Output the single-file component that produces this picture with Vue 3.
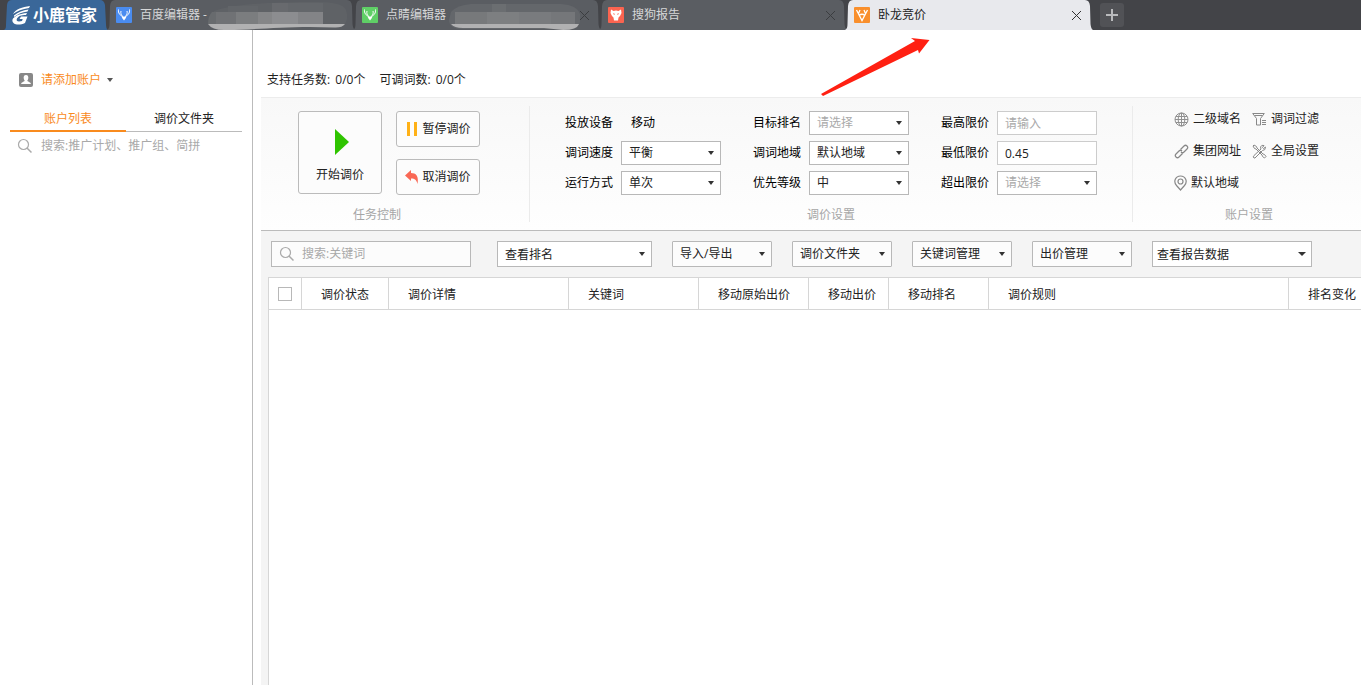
<script setup>
import { reactive, ref } from 'vue'

const tabs = [
  { name: '百度编辑器', suffix: ' -', icon: 'deer', color: '#4a8cf0', close: false, mask: 'a' },
  { name: '点睛编辑器', suffix: '', icon: 'deer', color: '#5fcf66', close: true, mask: 'b' },
  { name: '搜狗报告', suffix: '', icon: 'fox', color: '#fb6450', close: true },
  { name: '卧龙竞价', suffix: '', icon: 'dragon', color: '#f98f2c', close: true, active: true },
]

const form = reactive({ speed: '平衡', mode: '单次', rank: '', area: '默认地域', level: '中', max: '', min: '0.45', over: '' })

const fields = [
  { id: 'device', label: '投放设备', type: 'text', value: '移动' },
  { id: 'rank', label: '目标排名', type: 'select', options: ['1', '2', '3'], hint: '请选择' },
  { id: 'max', label: '最高限价', type: 'input', hint: '请输入' },
  { id: 'speed', label: '调词速度', type: 'select', options: ['平衡', '快速'] },
  { id: 'area', label: '调词地域', type: 'select', options: ['默认地域'] },
  { id: 'min', label: '最低限价', type: 'input', hint: '请输入' },
  { id: 'mode', label: '运行方式', type: 'select', options: ['单次', '循环'] },
  { id: 'level', label: '优先等级', type: 'select', options: ['高', '中', '低'] },
  { id: 'over', label: '超出限价', type: 'select', options: ['是', '否'], hint: '请选择' },
]

const menus = ['导入/导出', '调价文件夹', '关键词管理', '出价管理']
const columns = ['调价状态', '调价详情', '关键词', '移动原始出价', '移动出价', '移动排名', '调价规则', '排名变化']
const rankView = ref('查看排名')
const reportView = ref('查看报告数据')
const accountKeyword = ref('')
const keyword = ref('')
</script>

<template>
  <div class="page">
    <header class="topbar">
      <a class="brand" href="#">
        <svg class="shape" viewBox="0 0 104 30" preserveAspectRatio="none"><path d="M0 30C2 29 2 27 2 24L3 5Q3.500 0 8 0H96Q100 0 101 5L102 24Q102 29 104 30Z" fill="#3a6799" /></svg>
        <svg class="mark" width="19" height="19" viewBox="0 0 19 19" fill="#fff">
          <path d="M1 8C4 3 10 1 18 0L17 2C10 3 5 5 1 8Z" />
          <path d="M2 9.500C6 6 11 4.300 16.500 3.500L15.500 5.500C10 6 6 8 2 11Z" />
          <path d="M1 12.500C4 9.500 8 7.500 15 7L14 9C9 9 6.500 10 5 12.500C4 14.500 5 15.500 7 15.500L10 15L10.700 13H7.500L9 10.500H15.500L13 17C9 19 4 19 2 17.500C0 16 0 14 1 12.500Z" />
        </svg>
        <span class="brand-name">小鹿管家</span>
      </a>
      <nav class="tabs">
        <div v-for="t in tabs" :key="t.name" class="tab" :class="{ active: t.active }">
          <svg class="shape" viewBox="0 0 248 30" preserveAspectRatio="none"><path d="M0 30C2 29 2.500 27 2.500 24L3 6Q3.500 0 8 0H240Q244.500 0 245 6L245.500 24Q246 29 248 30Z" /></svg>
          <a class="tab-link" href="#">
            <svg class="tab-icon" width="16" height="16" viewBox="0 0 16 16">
              <rect width="16" height="16" rx="1" :fill="t.color" />
              <g v-if="t.icon === 'deer'" fill="none" stroke="#fff">
                <path d="M2.500 2.500C2 6 4 8.500 7 9.500M13.500 2.500C14 6 12 8.500 9 9.500M5 4C4.500 6 5 7 6 8.500M11 4C11.500 6 11 7 10 8.500" />
                <path d="M5.500 9.500H10.500L9.500 11.500L8 13.500L6.500 11.500Z" fill="#fff" stroke="none" />
              </g>
              <path v-else-if="t.icon === 'fox'" fill="#fff" fill-rule="evenodd" d="M3 2.500L5.500 4L8 3.500L10.500 4L13 2.500L13.500 6L12 9L10.500 10.500L10 13.500H6L5.500 10.500L4 9L2.500 6ZM5 6L6 8L7 7ZM11 6L10 8L9 7Z" />
              <g v-else fill="none" stroke="#fff" stroke-width="1.300">
                <path d="M2.500 3L8 13.500L13.500 3M5 8.500Q8 6 11 8.500M6 3L4.500 6.500M10 3L11.500 6.500" />
              </g>
            </svg>
            <span>{{ t.name }}{{ t.suffix }}</span>
          </a>
          <svg v-if="t.mask === 'a'" class="mask mask-a" width="140" height="29" viewBox="0 0 140 29">
            <path d="M6 9C25 2 60 0 110 0Q135 0 138 8Q141 18 136 23L128 25C80 23 35 29 16 28Q3 28 0 20Z" fill="#5f6266" />
            <path d="M0 22H137Q134 26 126 25.500C80 23 35 29 16 28Q4 28 0 22Z" fill="#b1b1b2" />
            <path d="M4 10H28V22H0Q0 14 4 10Z" fill="#686b6e" />
            <path d="M8 10H28V22H8Z" fill="#707275" />
            <path d="M28 10H50V22H28Z" fill="#7b7d7f" /><path d="M50 10H64V22H50Z" fill="#858688" />
            <path d="M64 10H90V22H64Z" fill="#8c8d90" /><path d="M90 10H115V22H90Z" fill="#838487" />
            <path d="M20 4H50V10H20Z" fill="#626569" /><path d="M64 1H80V10H64Z" fill="#686a6e" /><path d="M80 1H115V10H80Z" fill="#64676b" />
          </svg>
          <svg v-if="t.mask === 'b'" class="mask mask-b" width="132" height="26" viewBox="0 0 132 26">
            <path d="M2 8Q8 1 22 0H112Q128 1 131 10V18Q130 25 118 25H14Q0 25 0 16Z" fill="#64676b" />
            <path d="M2 20H130Q128 26 114 26L95 24H14Q5 24 2 20Z" fill="#b1b1b2" />
            <path d="M6 8H38V20H6Z" fill="#77797b" /><path d="M38 8H70V20H38Z" fill="#7d7f81" />
            <path d="M70 8H102V20H70Z" fill="#797b7e" /><path d="M102 8H126V20H102Z" fill="#75777a" />
            <path d="M43 0H57V8H43Z" fill="#6b6e71" />
          </svg>
          <button v-if="t.close" class="close" type="button" aria-label="关闭">
            <svg width="11" height="11" viewBox="0 0 11 11" fill="none" stroke="currentColor"><path d="M1 1L10 10M10 1L1 10" /></svg>
          </button>
        </div>
      </nav>
      <button class="add" type="button" aria-label="新建标签">
        <svg width="12" height="12" viewBox="0 0 12 12"><path d="M5 0H7V5H12V7H7V12H5V7H0V5H5Z" fill="#b9babc" /></svg>
      </button>
    </header>

    <div class="body">
      <aside class="side">
        <button class="account" type="button">
          <svg width="14" height="14" viewBox="0 0 14 14"><rect width="14" height="14" rx="2" fill="#888" /><path d="M7 2C9 2 9.500 3.500 9.300 5C9.200 6.500 8.500 7 8.300 8C9.500 9 11.500 9 12 11H2C2.500 9 4.500 9 5.700 8C5.500 7 4.800 6.500 4.700 5C4.500 3.500 5 2 7 2Z" fill="#fff" /></svg>
          <span>请添加账户</span>
          <i class="caret"></i>
        </button>
        <div class="side-tabs">
          <button class="on" type="button">账户列表</button>
          <button type="button">调价文件夹</button>
        </div>
        <label class="side-search">
          <svg width="16" height="16" viewBox="0 0 16 16" fill="none" stroke="#aaa"><circle cx="6.500" cy="6.500" r="5" stroke-width="1.200" /><path d="M10 10L14.500 14.500" stroke-width="1.500" /></svg>
          <input v-model="accountKeyword" type="text" aria-label="搜索账户" placeholder="搜索:推广计划、推广组、简拼">
        </label>
      </aside>

      <main class="main">
        <div class="stats">
          <span>支持任务数: <b>0/0个</b></span>
          <span>可调词数: <b>0/0个</b></span>
        </div>

        <div class="ribbon">
          <section class="group tasks">
            <div class="task-buttons">
              <button class="start" type="button">
                <svg width="14" height="26" viewBox="0 0 14 26"><path d="M0 0L14 13L0 26Z" fill="#2fc400" /></svg>
                <span>开始调价</span>
              </button>
              <div class="stack">
                <button type="button">
                  <svg width="14" height="14" viewBox="0 0 14 14"><path d="M2 0H5V14H2ZM9 0H12V14H9Z" fill="#ffb117" /></svg>
                  <span>暂停调价</span>
                </button>
                <button type="button">
                  <svg width="14" height="14" viewBox="0 0 14 14"><path d="M0 5.500L6 0V3C11 3 14 6 12.500 14C11.500 10 10 8.500 6 8.500V11Z" fill="#f96855" /></svg>
                  <span>取消调价</span>
                </button>
              </div>
            </div>
            <h2>任务控制</h2>
          </section>

          <section class="group settings">
            <div class="fields">
              <div v-for="f in fields" :key="f.id" class="field">
                <template v-if="f.type === 'text'">
                  <span>{{ f.label }}</span>
                  <span class="plain">{{ f.value }}</span>
                </template>
                <template v-else>
                  <label :for="f.id">{{ f.label }}</label>
                  <span v-if="f.type === 'select'" class="pick">
                    <select :id="f.id" v-model="form[f.id]" :class="{ empty: !form[f.id] }">
                      <option v-if="f.hint" value="">{{ f.hint }}</option>
                      <option v-for="o in f.options" :key="o">{{ o }}</option>
                    </select>
                    <i class="caret"></i>
                  </span>
                  <input v-else :id="f.id" v-model="form[f.id]" type="text" :placeholder="f.hint">
                </template>
              </div>
            </div>
            <h2>调价设置</h2>
          </section>

          <section class="group links">
            <div class="link-grid">
              <a href="#">
                <svg width="15" height="15" viewBox="0 0 15 15" fill="none" stroke="#909090"><circle cx="7.500" cy="7.500" r="6.500" /><ellipse cx="7.500" cy="7.500" rx="3.300" ry="6.500" /><path d="M7.500 1V14M1 7.500H14M2 4.500H13M2 10.500H13" /></svg>
                二级域名
              </a>
              <a href="#">
                <svg width="15" height="15" viewBox="0 0 15 15" fill="none" stroke="#888"><path d="M.7 1.500H12.300L8.500 6.500V13H4.500V6.500ZM2.500 3.500H10.500M10 8.500H14M10 10.500H14M10 12.500H14" /></svg>
                调词过滤
              </a>
              <a href="#">
                <svg width="15" height="15" viewBox="0 0 15 15" fill="none" stroke="#888" stroke-width="1.200"><path d="M6.500 5.500L10 2Q11.500 .5 13 2Q14.500 3.500 13 5L10 8Q8.500 9.500 7 8M8.500 9.500L5 13Q3.500 14.500 2 13Q.5 11.500 2 10L5 7Q6.500 5.500 8 7" /></svg>
                集团网址
              </a>
              <a href="#">
                <svg width="15" height="15" viewBox="0 0 15 15" fill="none" stroke="#888"><path d="M1 2L2 1L4.500 2.500L5 4L11 10L12.500 10.500L14 12.500L12.500 14L10.500 12.500L10 11L4 5L2.500 4.500ZM13.500 3L11.500 4.500L10.500 3.500L12 1.500Q9.500 .5 8.500 3L9 5L2 11.500Q.5 13 2 14Q3 14.500 4 13L10.500 6.500Q13.500 6.500 13.500 3Z" /></svg>
                全局设置
              </a>
              <a class="place" href="#">
                <svg width="13" height="16" viewBox="0 0 13 16" fill="none" stroke="#888" stroke-width="1.200"><path d="M6.500 15L2.500 10.500C-1 6.500 1.500 1 6.500 1C11.500 1 14 6.500 10.500 10.500Z" /><circle cx="6.500" cy="6.500" r="2.500" /></svg>
                默认地域
              </a>
            </div>
            <h2>账户设置</h2>
          </section>
        </div>

        <div class="work">
          <div class="toolbar">
            <label class="search">
              <svg width="16" height="16" viewBox="0 0 16 16" fill="none" stroke="#aaa"><circle cx="6.500" cy="6.500" r="5" stroke-width="1.200" /><path d="M10 10L14.500 14.500" stroke-width="1.500" /></svg>
              <input v-model="keyword" type="text" aria-label="搜索关键词" placeholder="搜索:关键词">
            </label>
            <span class="pick rank-pick">
              <select v-model="rankView" aria-label="查看排名"><option>查看排名</option></select>
              <i class="caret"></i>
            </span>
            <button v-for="m in menus" :key="m" class="menu" type="button">{{ m }}<i class="caret"></i></button>
            <span class="pick report-pick">
              <select v-model="reportView" aria-label="查看报告数据"><option>查看报告数据</option></select>
              <i class="caret"></i>
            </span>
          </div>
          <div class="sheet">
            <table>
              <colgroup>
                <col class="c0"><col class="c1"><col class="c2"><col class="c3"><col class="c4"><col class="c5"><col class="c6"><col class="c7"><col>
              </colgroup>
              <thead>
                <tr>
                  <th class="check"><input type="checkbox" aria-label="全选"></th>
                  <th v-for="c in columns" :key="c" scope="col">{{ c }}</th>
                </tr>
              </thead>
            </table>
          </div>
        </div>
      </main>
    </div>

    <svg class="pointer" width="110" height="60" viewBox="0 0 110 60"><path d="M1 57L95 4L91 1L109.500 3L99 16.500L98 13L3 59Z" fill="#ff2012" /></svg>
  </div>
</template>

<style>
body {
  margin: 0;
  background: #fff;
}
</style>

<style scoped>
.page {
  position: relative;
  display: flex;
  flex-direction: column;
  min-height: 100vh;
  overflow: hidden;
  font: 12px/16px "Open Sans", "Noto Sans CJK SC", sans-serif;
  color: #222;
}
.page * {
  box-sizing: border-box;
}
svg {
  display: block;
  flex: none;
}
button, input, select {
  margin: 0;
  padding: 0;
  border: 0;
  background: none;
  font: inherit;
  color: inherit;
  outline: 0;
}
input::placeholder {
  color: #a9a9a9;
  opacity: 1;
}
a {
  color: inherit;
  text-decoration: none;
}
.caret {
  width: 0;
  height: 0;
  border: 3px solid transparent;
  border-top: 4px solid #333;
  border-bottom: 0;
}

/* window tabs */
.topbar {
  display: flex;
  height: 30px;
  background: #434448;
}
.brand {
  position: relative;
  display: flex;
  align-items: center;
  gap: 2px;
  width: 104px;
  margin: 0 0 0 4px;
  padding-left: 8px;
  color: #fff;
}
.brand-name {
  position: relative;
  font-size: 16px;
  font-weight: 700;
  line-height: 30px;
  white-space: nowrap;
}
.mark {
  position: relative;
}
.shape {
  position: absolute;
  top: 0;
  left: 0;
  width: 100%;
  height: 100%;
}
.tabs {
  display: flex;
  flex: 0 1 984px;
}
.tab {
  position: relative;
  display: flex;
  flex: 1;
  align-items: center;
  justify-content: space-between;
  padding: 0 10px 0 8px;
  color: #d6d7d8;
}
.tab .shape {
  left: -1px;
  width: calc(100% + 2px);
  fill: #5a5d62;
}
.tab.active {
  color: #222;
}
.tab.active .shape {
  fill: #e8e9ed;
}
.tab-link {
  position: relative;
  display: flex;
  align-items: center;
  gap: 8px;
  white-space: pre;
}
.close {
  position: relative;
  color: #3b3d40;
}
.tab.active .close {
  color: #333;
}
.mask {
  position: absolute;
}
.mask-a {
  top: 2px;
  left: 100px;
}
.mask-b {
  top: 4px;
  left: 95px;
}
.add {
  display: flex;
  align-items: center;
  justify-content: center;
  width: 24px;
  height: 24px;
  margin: 3px 0 0 8px;
  border-radius: 3px;
  background: #515256;
}

/* account panel */
.body {
  display: flex;
  flex: 1;
}
.side {
  flex: none;
  width: 253px;
  padding: 42px 10px 0;
  border-right: 1px solid #bbb;
}
.account {
  display: flex;
  align-items: center;
  gap: 8px;
  height: 16px;
  padding-left: 9px;
  color: #f98b1e;
}
.account .caret {
  margin-left: -2px;
  border-top-color: #555;
}
.side-tabs {
  display: flex;
  margin-top: 18px;
  box-shadow: inset 0 -1px #bbb;
}
.side-tabs button {
  flex: 1;
  height: 26px;
  padding-top: 2px;
  border-bottom: 2px solid transparent;
}
.side-tabs .on {
  border-color: #f98b1e;
  color: #f98b1e;
}
.side-search {
  display: flex;
  align-items: center;
  gap: 8px;
  height: 28px;
  padding-left: 7px;
}
.side-search input {
  flex: 1;
  min-width: 0;
}

.main {
  display: flex;
  flex: 1;
  flex-direction: column;
  min-width: 0;
  margin-left: 8px;
}
.stats {
  display: flex;
  gap: 14px;
  padding: 42px 6px 9px;
}
.stats b {
  margin-left: 2px;
  font-weight: 400;
}

/* ribbon */
.ribbon {
  display: flex;
  height: 134px;
  padding: 8px 0;
  border-top: 1px solid #ececec;
  border-bottom: 1px solid #bbb;
  background: linear-gradient(#f8f8f8, #fefefe);
}
.group {
  display: flex;
  flex-direction: column;
  justify-content: space-between;
  padding-top: 5px;
}
.group + .group {
  border-left: 1px solid #ebebeb;
}
.group h2 {
  margin: 0;
  font-size: 12px;
  font-weight: 400;
  line-height: 14px;
  text-align: center;
  color: #a6a6a6;
}
.tasks {
  flex: none;
  width: 268px;
}
.tasks h2 {
  width: 232px;
}
.task-buttons {
  display: flex;
  gap: 14px;
  padding-left: 37px;
}
.task-buttons button {
  display: flex;
  align-items: center;
  justify-content: center;
  gap: 3px;
  width: 84px;
  height: 36px;
  border: 1px solid #bbb;
  border-radius: 3px;
  background: #fcfcfc;
}
.task-buttons .start {
  flex-direction: column;
  gap: 12px;
  height: 83px;
  padding-top: 6px;
}
.start svg {
  margin-left: 3px;
}
.stack {
  display: flex;
  flex-direction: column;
  gap: 12px;
}
.settings {
  flex: 1;
}
.fields {
  display: grid;
  grid-template-columns: repeat(3, 156px);
  gap: 6px 32px;
  justify-content: center;
  color: #000;
}
.field {
  display: flex;
  align-items: center;
  gap: 8px;
  height: 24px;
}
.plain {
  padding-left: 10px;
}
.field input {
  width: 100px;
  height: 24px;
  padding: 0 7px;
  border: 1px solid #ccc;
  background: #fff;
  color: #222;
}
.pick {
  position: relative;
  width: 100px;
  height: 24px;
}
.pick select {
  display: block;
  width: 100%;
  height: 100%;
  padding: 0 7px;
  border: 1px solid #b8b8b8;
  border-radius: 0;
  background: #fff;
  color: #222;
  appearance: none;
}
.pick select.empty {
  color: #a9a9a9;
}
.pick .caret {
  position: absolute;
  top: 50%;
  right: 7px;
  margin-top: -2px;
  pointer-events: none;
}
.links {
  flex: none;
  width: 229px;
}
.links h2 {
  padding-left: 4px;
}
.link-grid {
  display: grid;
  grid-template-columns: repeat(2, max-content);
  gap: 16px 11px;
  padding-left: 41px;
}
.link-grid a {
  display: flex;
  align-items: center;
  gap: 4px;
}

/* keyword table */
.work {
  display: flex;
  flex: 1;
  flex-direction: column;
  padding-left: 7px;
  background: #f4f4f4;
}
.toolbar {
  display: flex;
  gap: 20px;
  padding: 10px 3px;
}
.search {
  display: flex;
  align-items: center;
  gap: 7px;
  width: 200px;
  height: 26px;
  margin-right: 6px;
  padding: 0 7px;
  border: 1px solid #b8b8b8;
  background: #fcfcfc;
}
.search input {
  flex: 1;
  min-width: 0;
}
.toolbar .pick {
  height: 26px;
}
.toolbar .pick select {
  padding-top: 2px;
}
.toolbar .rank-pick {
  width: 155px;
}
.toolbar .report-pick {
  width: 160px;
}
.toolbar .report-pick select {
  padding-left: 4px;
}
.report-pick .caret {
  right: 6px;
  border-width: 4px 4px 0;
}
.menu {
  display: flex;
  align-items: center;
  justify-content: space-between;
  width: 100px;
  height: 26px;
  padding: 0 6px 0 7px;
  border: 1px solid #b8b8b8;
  border-radius: 1px;
  background: #fcfcfc;
}
.sheet {
  flex: 1;
  border-left: 1px solid #d6d6d6;
  background: #fff;
}
table {
  width: 100%;
  table-layout: fixed;
  border-spacing: 0;
}
th {
  height: 33px;
  padding: 2px 0 0 19px;
  border: solid #d6d6d6;
  border-width: 1px 1px 1px 0;
  font-weight: 400;
  text-align: left;
  white-space: nowrap;
}
th:last-child {
  border-right: 0;
}
.c0 { width: 33px; }
.c1 { width: 87px; }
.c2 { width: 180px; }
.c3 { width: 130px; }
.c4 { width: 110px; }
.c5 { width: 80px; }
.c6 { width: 100px; }
.c7 { width: 300px; }
.check {
  padding: 0 0 0 9px;
}
.check input {
  display: block;
  width: 14px;
  height: 14px;
  border: 1px solid #b8b8b8;
  background: #fff;
  appearance: none;
}
.check input:checked {
  background: #f98b1e;
}

.pointer {
  position: absolute;
  top: 37px;
  left: 820px;
  pointer-events: none;
}
</style>
